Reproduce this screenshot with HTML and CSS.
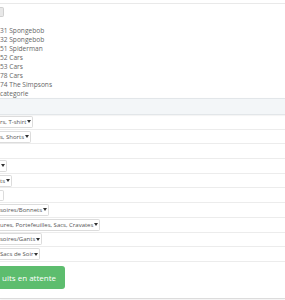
FILE: index.html
```html
<!DOCTYPE html>
<html lang="fr">
<head>
    <meta charset="UTF-8">
    <meta name="viewport" content="width=device-width, initial-scale=1.0">
    <title>Produits</title>
    <link rel="stylesheet" href="styles.css">
</head>
<body>

<div class="page">
    <div class="topbar"></div>
    <div class="mini-btn"></div>

    <ul class="list">
        <li>31 Spongebob</li>
        <li>32 Spongebob</li>
        <li>51 Spiderman</li>
        <li>52 Cars</li>
        <li>53 Cars</li>
        <li>78 Cars</li>
        <li>74 The Simpsons</li>
        <li>categorie</li>
    </ul>

    <div class="panel">
        <div class="panel-head"></div>
        <div class="row"><span class="sel">rs, T-shirt<i class="caret"></i></span></div>
        <div class="row"><span class="sel">s, Shorts<i class="caret"></i></span></div>
        <div class="row"></div>
        <div class="row"><span class="sel"><i class="caret"></i></span></div>
        <div class="row"><span class="sel">ts<i class="caret"></i></span></div>
        <div class="row"><span class="box"></span></div>
        <div class="row"><span class="sel">soires/Bonnets<i class="caret"></i></span></div>
        <div class="row"><span class="sel">ures, Portefeuilles, Sacs, Cravates<i class="caret"></i></span></div>
        <div class="row"><span class="sel">soires/Gants<i class="caret"></i></span></div>
        <div class="row"><span class="sel">Sacs de Soir<i class="caret"></i></span></div>
        <div class="actions">
            <button class="btn-green">uits en attente</button>
        </div>
    </div>
</div>

</body>
</html>
```

FILE: styles.css
```css
body {
    margin: 0;
    padding: 0;
    font-family: "Open Sans", Arial, sans-serif;
    color: #666;
    background-color: #fff;
}
.page {
    width: 285px;
    height: 300px;
    overflow: hidden;
}
.topbar {
    height: 3px;
    border-bottom: 1px solid #e9e9e9;
}
.mini-btn {
    width: 3px;
    height: 8px;
    margin-top: 3px;
    background-color: #e8e8e8;
    border: 1px solid #d0d0d0;
    border-left: none;
    border-radius: 0 2px 2px 0;
}
.list {
    list-style: none;
    margin: 9px 0 0 0;
    padding: 0;
    font-size: 6.6px;
    line-height: 9px;
    color: #666;
}
.panel {
    border-bottom: 1px solid #dcdcdc;
    box-shadow: 0 1px 2px rgba(0, 0, 0, 0.06);
}
.panel-head {
    height: 15px;
    background-color: #f3f6f8;
    border-top: 1px solid #e2e6e9;
    border-bottom: 1px solid #e2e6e9;
    box-shadow: 0 1px 1px rgba(0, 0, 0, 0.04);
}
.row {
    height: 13.7px;
    border-bottom: 1px solid #ececec;
    display: flex;
    align-items: center;
}
.sel {
    display: inline-flex;
    align-items: center;
    height: 10px;
    padding: 0 1px 0 0;
    border: 1px solid #dcdcdc;
    border-left: none;
    border-radius: 0 2px 2px 0;
    font-size: 6px;
    color: #555;
    white-space: nowrap;
}
.caret {
    display: inline-block;
    width: 0;
    height: 0;
    margin-left: 1px;
    border-top: 3px solid #333;
    border-left: 2px solid transparent;
    border-right: 2px solid transparent;
}
.box {
    display: inline-block;
    width: 3px;
    height: 9px;
    border: 1px solid #dcdcdc;
    border-left: none;
    border-radius: 0 2px 2px 0;
}
.actions {
    height: 34px;
    padding-top: 2px;
}
.btn-green {
    height: 23px;
    width: 65px;
    padding: 0 0 0 2px;
    text-align: left;
    background-color: #5dbd6e;
    color: #fff;
    border: none;
    border-radius: 0 3px 3px 0;
    font-family: "Open Sans", Arial, sans-serif;
    font-size: 8px;
}
```
